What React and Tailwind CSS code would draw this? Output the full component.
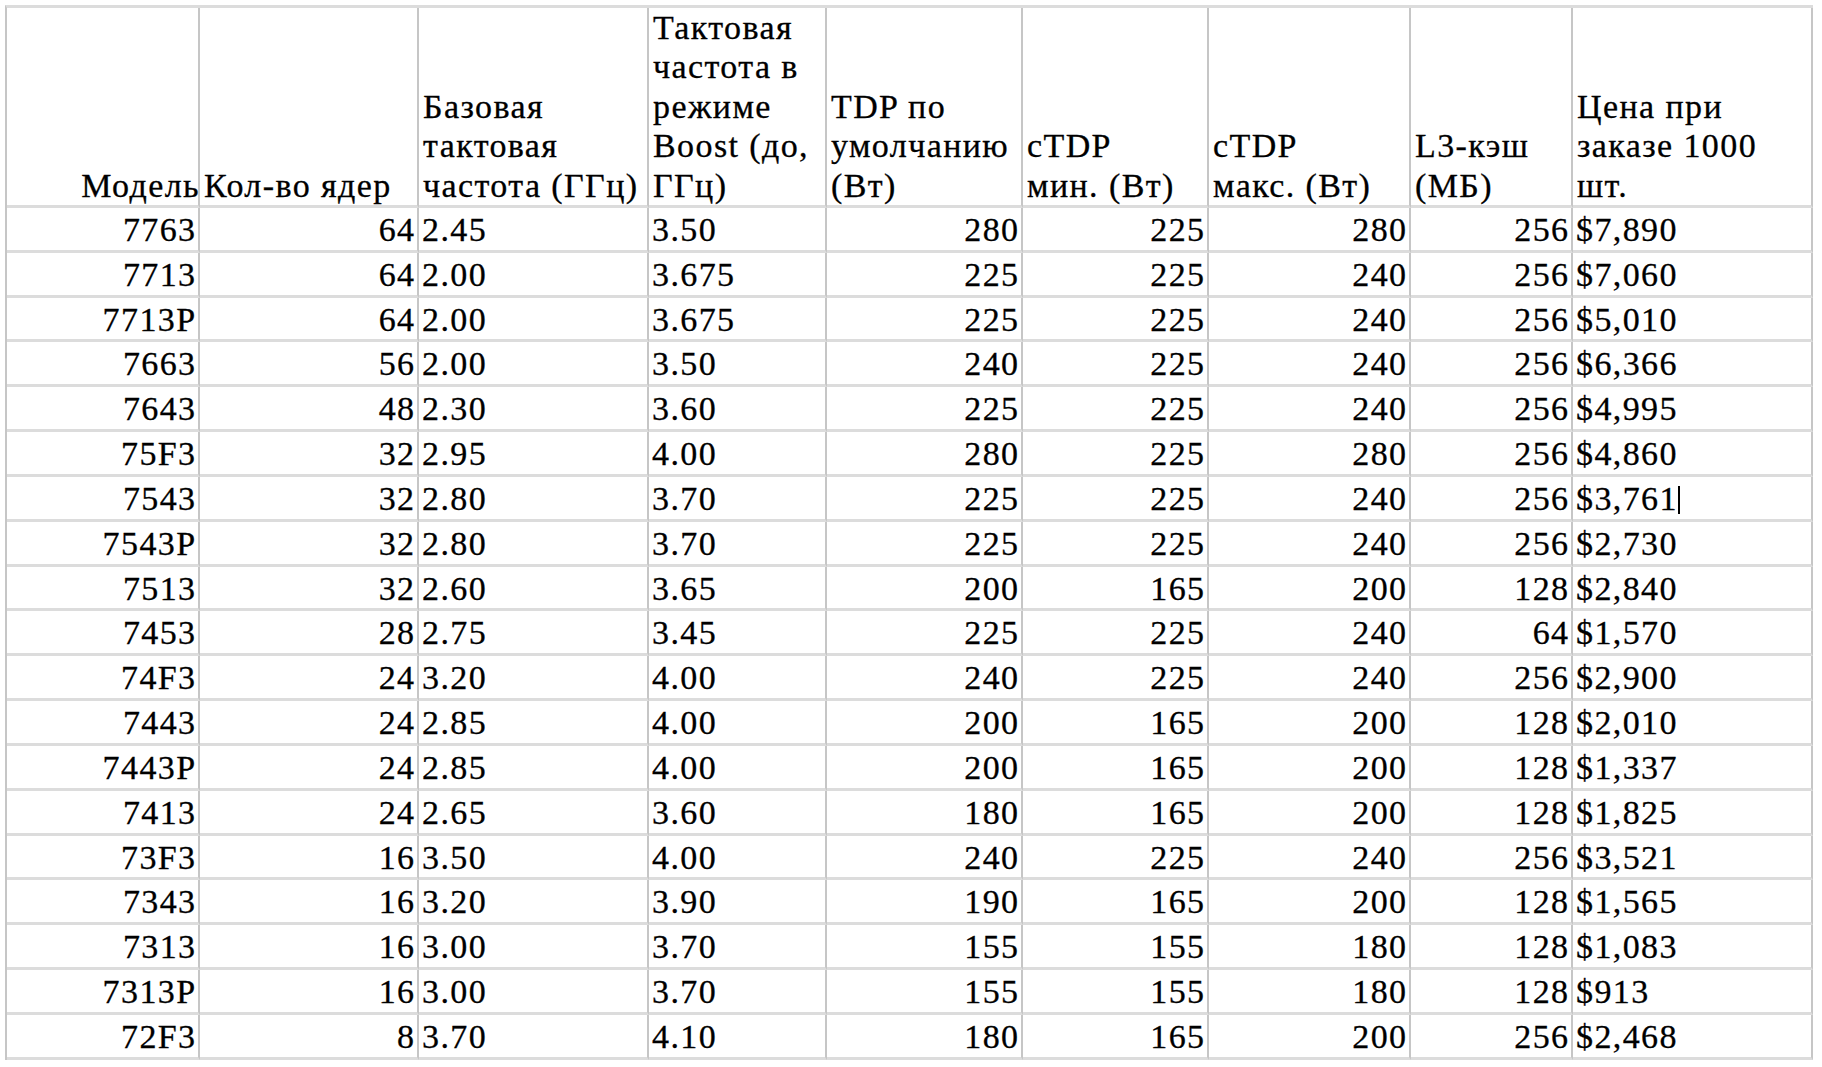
import React from 'react';

const headers = [
  { lines: ['Модель'], right: true },
  { lines: ['Кол-во ядер'] },
  { lines: ['Базовая', 'тактовая', 'частота (ГГц)'] },
  { lines: ['Тактовая', 'частота в', 'режиме', 'Boost (до,', 'ГГц)'] },
  { lines: ['TDP по', 'умолчанию', '(Вт)'] },
  { lines: ['cTDP', 'мин. (Вт)'] },
  { lines: ['cTDP', 'макс. (Вт)'] },
  { lines: ['L3-кэш', '(МБ)'] },
  { lines: ['Цена при', 'заказе 1000', 'шт.'] },
];

// right-aligned columns
const rightCols = [true, true, false, false, true, true, true, true, false];

const rows = [
  ['7763', '64', '2.45', '3.50', '280', '225', '280', '256', '$7,890'],
  ['7713', '64', '2.00', '3.675', '225', '225', '240', '256', '$7,060'],
  ['7713P', '64', '2.00', '3.675', '225', '225', '240', '256', '$5,010'],
  ['7663', '56', '2.00', '3.50', '240', '225', '240', '256', '$6,366'],
  ['7643', '48', '2.30', '3.60', '225', '225', '240', '256', '$4,995'],
  ['75F3', '32', '2.95', '4.00', '280', '225', '280', '256', '$4,860'],
  ['7543', '32', '2.80', '3.70', '225', '225', '240', '256', '$3,761'],
  ['7543P', '32', '2.80', '3.70', '225', '225', '240', '256', '$2,730'],
  ['7513', '32', '2.60', '3.65', '200', '165', '200', '128', '$2,840'],
  ['7453', '28', '2.75', '3.45', '225', '225', '240', '64', '$1,570'],
  ['74F3', '24', '3.20', '4.00', '240', '225', '240', '256', '$2,900'],
  ['7443', '24', '2.85', '4.00', '200', '165', '200', '128', '$2,010'],
  ['7443P', '24', '2.85', '4.00', '200', '165', '200', '128', '$1,337'],
  ['7413', '24', '2.65', '3.60', '180', '165', '200', '128', '$1,825'],
  ['73F3', '16', '3.50', '4.00', '240', '225', '240', '256', '$3,521'],
  ['7343', '16', '3.20', '3.90', '190', '165', '200', '128', '$1,565'],
  ['7313', '16', '3.00', '3.70', '155', '155', '180', '128', '$1,083'],
  ['7313P', '16', '3.00', '3.70', '155', '155', '180', '128', '$913'],
  ['72F3', '8', '3.70', '4.10', '180', '165', '200', '256', '$2,468'],
];

const cellBorder =
  "font-['Liberation_Serif',serif] tracking-[1.4px] [-webkit-text-stroke:0.3px_#000] border-r-2 border-b-[3px] border-r-[#c6c6c6] border-b-[#dcdcdc]";

export default function App() {
  return (
    <div className="min-h-screen bg-white pl-[5px] pt-[5px] text-[34px] text-black font-['Liberation_Serif',serif]">
      <div className="grid w-fit grid-cols-[193px_219px_230px_178px_196px_186px_202px_162px_240px] border-l-2 border-t-[3px] border-l-[#c6c6c6] border-t-[#dcdcdc]">
        {headers.map((h, i) => (
          <div
            key={'h' + i}
            className={`${cellBorder} flex h-[200px] flex-col justify-end whitespace-nowrap leading-[39.4px] ${
              h.right ? 'items-end pr-0' : 'items-start pl-[4px]'
            }`}
          >
            {h.lines.map((l) => (
              <span key={l} className={h.right ? '-mr-[2px]' : ''}>
                {l}
              </span>
            ))}
          </div>
        ))}

        {rows.map((row, r) =>
          row.map((val, c) => (
            <div
              key={r + '-' + c}
              className={`${cellBorder} flex h-[44.84px] items-start whitespace-nowrap pt-[5px] leading-[34px] ${
                rightCols[c] ? 'justify-end pr-[1.5px]' : 'justify-start pl-[3px]'
              }`}
            >
              <span>{val}</span>
              {r === 6 && c === 8 && (
                <span className="mt-[4px] inline-block h-[28px] w-[2px] bg-black" />
              )}
            </div>
          ))
        )}
      </div>
    </div>
  );
}
